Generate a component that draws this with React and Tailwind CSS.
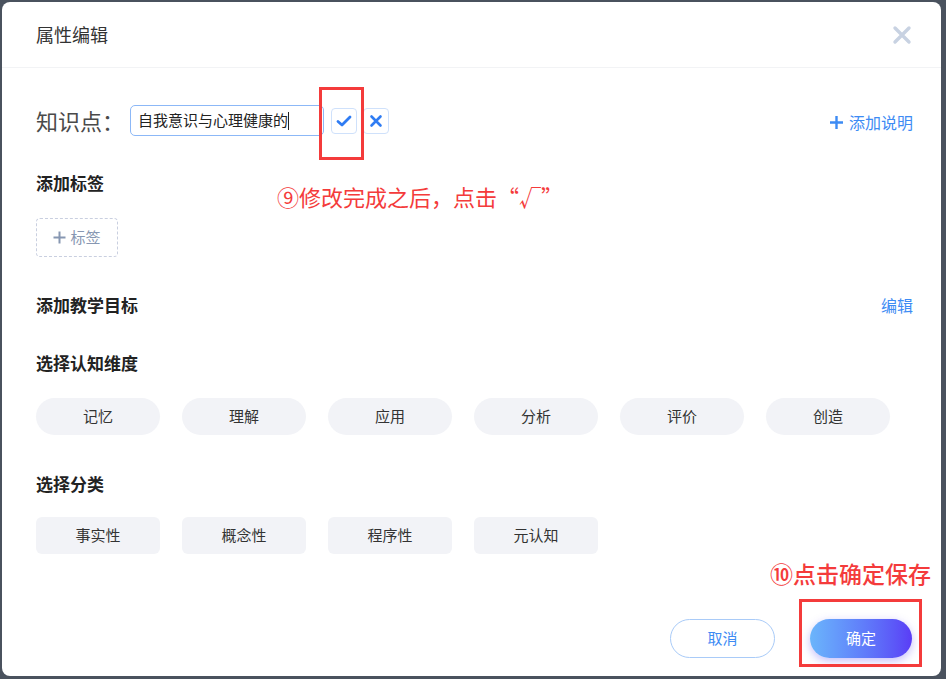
import React from "react";

const dims = ["记忆", "理解", "应用", "分析", "评价", "创造"];
const kinds = ["事实性", "概念性", "程序性", "元认知"];

function App() {
  return (
    <div
      className="w-[946px] h-[679px] bg-[#4a525e] p-[2px] overflow-hidden"
      style={{ fontFamily: '"Noto Sans CJK SC", "Noto Sans", sans-serif' }}
    >
      <div className="relative w-[939px] h-[674px] bg-white rounded-[8px] flex flex-col">
        {/* header */}
        <div className="h-[66px] flex items-center justify-between pl-[34px] pr-[28px] border-b border-[#f2f3f5]">
          <p className="text-[18px] text-[#333]">属性编辑</p>
          <svg width="20" height="20" viewBox="0 0 20 20" className="mr-[1px]">
            <path d="M3 3 L17 17 M17 3 L3 17" stroke="#c8d2e2" strokeWidth="3.4" strokeLinecap="round" />
          </svg>
        </div>

        {/* body */}
        <div className="flex flex-col pl-[34px] pr-[28px]">
          <div className="mt-[37px] flex items-center justify-between">
            <div className="flex items-center">
              <p className="text-[22px] text-[#4a4a4a] leading-[31px] w-[94px]">知识点：</p>
              <div className="w-[194px] h-[31px] border border-[#8cb8f7] rounded-[5px] flex items-center pl-[7px] text-[15px] text-[#222]">
                自我意识与心理健康的<span className="w-[1px] h-[18px] bg-[#222]"></span>
              </div>
              <div className="ml-[7px] w-[26px] h-[26px] border border-[#cfe1fb] rounded-[4px] flex items-center justify-center">
                <svg width="16" height="14" viewBox="0 0 16 14">
                  <path d="M2 7.5 L6 11 L14 3" fill="none" stroke="#2f7cf3" strokeWidth="2.8" strokeLinecap="round" strokeLinejoin="round" />
                </svg>
              </div>
              <div className="ml-[6px] w-[26px] h-[26px] border border-[#cfe1fb] rounded-[4px] flex items-center justify-center">
                <svg width="14" height="14" viewBox="0 0 14 14">
                  <path d="M2.5 2.5 L11.5 11.5 M11.5 2.5 L2.5 11.5" stroke="#2f7cf3" strokeWidth="2.6" strokeLinecap="round" />
                </svg>
              </div>
            </div>
            <div className="flex items-center text-[16px] text-[#3d8bf4] mt-[3px]">
              <svg width="15" height="15" viewBox="0 0 15 15" className="mr-[5px]">
                <path d="M7.5 1 V14 M1 7.5 H14" stroke="#3d8bf4" strokeWidth="2.4" />
              </svg>
              添加说明
            </div>
          </div>

          <p className="mt-[35px] text-[17px] font-bold text-[#222] leading-[24px]">添加标签</p>
          <div className="mt-[23px] w-[82px] h-[39px] border border-dashed border-[#c9cfe0] rounded-[4px] flex items-center justify-center text-[15px] text-[#8797b2]">
            <svg width="13" height="13" viewBox="0 0 13 13" className="mr-[4px]">
              <path d="M6.5 0.5 V12.5 M0.5 6.5 H12.5" stroke="#8797b2" strokeWidth="2" />
            </svg>
            标签
          </div>

          <div className="mt-[36px] flex items-center justify-between leading-[24px]">
            <p className="text-[17px] font-bold text-[#222]">添加教学目标</p>
            <p className="text-[16px] text-[#3d8bf4]">编辑</p>
          </div>

          <p className="mt-[34px] text-[17px] font-bold text-[#222] leading-[24px]">选择认知维度</p>
          <div className="mt-[23px] flex gap-[22px]">
            {dims.map((d) => (
              <div key={d} className="w-[124px] h-[37px] rounded-full bg-[#f2f3f7] flex items-center justify-center text-[15px] text-[#333]">
                {d}
              </div>
            ))}
          </div>

          <p className="mt-[37px] text-[17px] font-bold text-[#222] leading-[24px]">选择分类</p>
          <div className="mt-[21px] flex gap-[22px]">
            {kinds.map((d) => (
              <div key={d} className="w-[124px] h-[37px] rounded-[6px] bg-[#f2f3f7] flex items-center justify-center text-[15px] text-[#333]">
                {d}
              </div>
            ))}
          </div>
        </div>

        {/* footer */}
        <div className="mt-auto mb-[18px] flex justify-end items-center gap-[35px] pr-[29px]">
          <div className="w-[105px] h-[39px] rounded-full border border-[#a9cbf8] flex items-center justify-center text-[15px] text-[#3d8bf4]">
            取消
          </div>
          <div className="w-[102px] h-[39px] rounded-full bg-gradient-to-r from-[#6bb5fb] to-[#5a3cf6] shadow-[0_3px_10px_rgba(90,70,240,0.35)] flex items-center justify-center text-[15px] text-white">
            确定
          </div>
        </div>

        {/* annotations */}
        <div className="absolute left-[317px] top-[85px] w-[45px] h-[73px] border-[3px] border-[#f43b3b]"></div>
        <p className="absolute left-[275px] top-[179px] text-[22px] leading-[30px] text-[#f43b3b]">⑨修改完成之后，点击“√”</p>
        <p className="absolute left-[768px] top-[555px] text-[23px] leading-[32px] font-medium text-[#f43b3b]">⑩点击确定保存</p>
        <div className="absolute left-[797px] top-[597px] w-[123px] h-[68px] border-[3px] border-[#f43b3b]"></div>
      </div>
    </div>
  );
}

export default App;
